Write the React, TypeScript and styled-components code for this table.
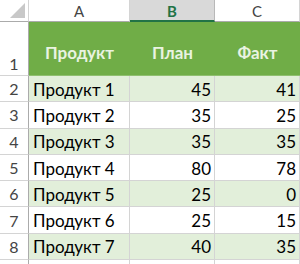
import React from "react";
import styled, { createGlobalStyle, css } from "styled-components";

const Global = createGlobalStyle`
  html, body { margin: 0; padding: 0; background: #ffffff; }
  body { font-family: "Lato", "Liberation Sans", sans-serif; }
  * { box-sizing: border-box; }
`;

const Sheet = styled.div`
  display: grid;
  grid-template-columns: 29px 101px 85px 85px;
  grid-template-rows: 22px 54px repeat(8, 26.3px);
  width: 300px;
  height: 264px;
  overflow: hidden;
  background: #ffffff;
`;

const Corner = styled.div`
  background: #ffffff;
  border-right: 1px solid #d4d4d4;
  border-bottom: 1px solid #ababab;
  display: flex;
  align-items: flex-end;
  justify-content: flex-end;
  padding: 0 3px 3px 0;
`;

const ColHeader = styled.div<{ $selected?: boolean }>`
  display: flex;
  align-items: center;
  justify-content: center;
  font-size: 15px;
  color: #444444;
  background: #ffffff;
  border-right: 1px solid #d4d4d4;
  border-bottom: 1px solid #ababab;
  padding-top: 1px;
  ${(p) =>
    p.$selected &&
    css`
      background: #d9d9d9;
      color: #217346;
      font-weight: 700;
      border-right-color: #b8b8b8;
      border-bottom: 2px solid #217346;
    `}
`;

const RowHeader = styled.div<{ $bottom?: boolean }>`
  display: flex;
  justify-content: center;
  align-items: ${(p) => (p.$bottom ? "flex-end" : "center")};
  padding-bottom: ${(p) => (p.$bottom ? "2px" : "0")};
  font-size: 16px;
  color: #444444;
  background: #ffffff;
  border-right: 1px solid #ababab;
  border-bottom: 1px solid #d4d4d4;
`;

const HeadCell = styled.div`
  display: flex;
  align-items: center;
  justify-content: center;
  padding-top: 7px;
  background: #70ad47;
  color: #e9f3e1;
  font-weight: 700;
  font-size: 17px;
  border-bottom: 1px solid #8fbf6f;
`;

const DataCell = styled.div<{ $band?: boolean; $num?: boolean }>`
  display: flex;
  align-items: center;
  justify-content: ${(p) => (p.$num ? "flex-end" : "flex-start")};
  padding: 1px 3px 0 4px;
  font-size: 17px;
  color: #000000;
  background: ${(p) => (p.$band ? "#e2efda" : "#ffffff")};
  border-right: 1px solid #d4d4d4;
  border-bottom: 1px solid #d4d4d4;
  white-space: nowrap;
`;

const rows = [
  ["Продукт 1", 45, 41],
  ["Продукт 2", 35, 25],
  ["Продукт 3", 35, 35],
  ["Продукт 4", 80, 78],
  ["Продукт 5", 25, 0],
  ["Продукт 6", 25, 15],
  ["Продукт 7", 40, 35],
] as const;

export default function App() {
  return (
    <>
      <Global />
      <Sheet>
        <Corner>
          <svg width="15" height="15" viewBox="0 0 15 15">
            <polygon points="15,0 15,15 0,15" fill="#c8c8c8" />
          </svg>
        </Corner>
        <ColHeader>A</ColHeader>
        <ColHeader $selected>B</ColHeader>
        <ColHeader>C</ColHeader>

        <RowHeader $bottom>1</RowHeader>
        <HeadCell>Продукт</HeadCell>
        <HeadCell>План</HeadCell>
        <HeadCell>Факт</HeadCell>

        {rows.map((r, i) => (
          <React.Fragment key={r[0]}>
            <RowHeader>{i + 2}</RowHeader>
            <DataCell $band={i % 2 === 0}>{r[0]}</DataCell>
            <DataCell $band={i % 2 === 0} $num>
              {r[1]}
            </DataCell>
            <DataCell $band={i % 2 === 0} $num>
              {r[2]}
            </DataCell>
          </React.Fragment>
        ))}

        <RowHeader />
        <DataCell />
        <DataCell />
        <DataCell />
      </Sheet>
    </>
  );
}
